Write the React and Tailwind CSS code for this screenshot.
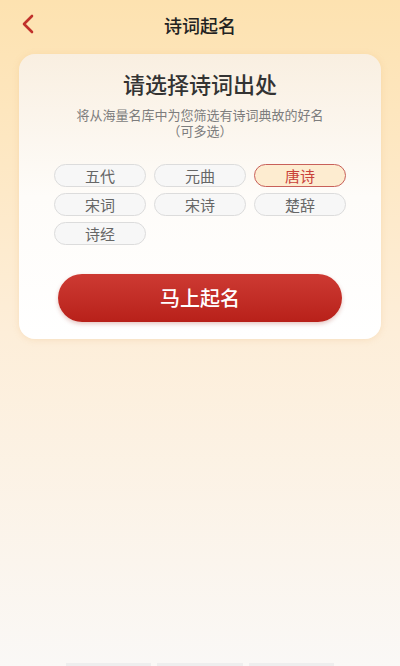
import React, { useState } from "react";

const sources = ["五代", "元曲", "唐诗", "宋词", "宋诗", "楚辞", "诗经"];

export default function App() {
  const [selected, setSelected] = useState(["唐诗"]);

  const toggle = (name) => {
    setSelected((prev) =>
      prev.includes(name) ? prev.filter((n) => n !== name) : [...prev, name]
    );
  };

  return (
    <div
      className="w-[400px] h-[666px] overflow-hidden flex flex-col bg-gradient-to-b from-[#fde2b0] via-[#fdeed9] to-[#faf8f6]"
      style={{ fontFamily: '"Noto Sans CJK SC", "Noto Sans", sans-serif' }}
    >
      {/* header */}
      <div className="relative h-[50px] flex items-center justify-center">
        <button className="absolute left-[18px] top-[13px] w-[20px] h-[22px] flex items-center justify-center">
          <svg width="14" height="20" viewBox="0 0 14 20" fill="none">
            <path
              d="M11 2 L3 10 L11 18"
              stroke="#c0312b"
              strokeWidth="2.6"
              strokeLinecap="round"
              strokeLinejoin="round"
            />
          </svg>
        </button>
        <h1 className="text-[18px] font-medium text-[#222] leading-none">诗词起名</h1>
      </div>

      {/* card */}
      <div className="mx-[19px] mt-[4px] rounded-[16px] bg-gradient-to-b from-[#f9efe1] via-[#fefcf9] to-white shadow-[0_1px_6px_rgba(230,180,110,0.25)] px-[35px] pt-[14px] pb-[17px]">
        <h2 className="text-center text-[22px] font-medium text-[#333] leading-[30px]">
          请选择诗词出处
        </h2>
        <div className="mt-[9px] text-center text-[13px] text-[#7d7d7d] leading-[16px]">
          <p>将从海量名库中为您筛选有诗词典故的好名</p>
          <p>（可多选）</p>
        </div>

        <div className="mt-[25px] grid grid-cols-3 gap-x-[8px] gap-y-[6px]">
          {sources.map((name) => {
            const on = selected.includes(name);
            return (
              <button
                key={name}
                onClick={() => toggle(name)}
                className={`h-[23px] rounded-full border text-[15px] leading-none flex items-center justify-center ${
                  on
                    ? "bg-[#fdecd0] border-[#c8605a] text-[#c9413a]"
                    : "bg-[#f7f7f7] border-[#dcdcdc] text-[#666]"
                }`}
              >
                {name}
              </button>
            );
          })}
        </div>

        <button className="mt-[29px] mx-auto w-[284px] h-[48px] rounded-full bg-gradient-to-b from-[#cd3a33] to-[#b82019] shadow-[0_2px_4px_rgba(150,30,20,0.25)] flex items-center justify-center text-white text-[20px] font-medium">
          马上起名
        </button>
      </div>

      <div className="flex-1" />
      <div className="h-[3px] flex justify-center gap-[6px] px-[66px]">
        <div className="flex-1 bg-[#eeeeee]" />
        <div className="flex-1 bg-[#eeeeee]" />
        <div className="flex-1 bg-[#eeeeee]" />
      </div>
    </div>
  );
}
